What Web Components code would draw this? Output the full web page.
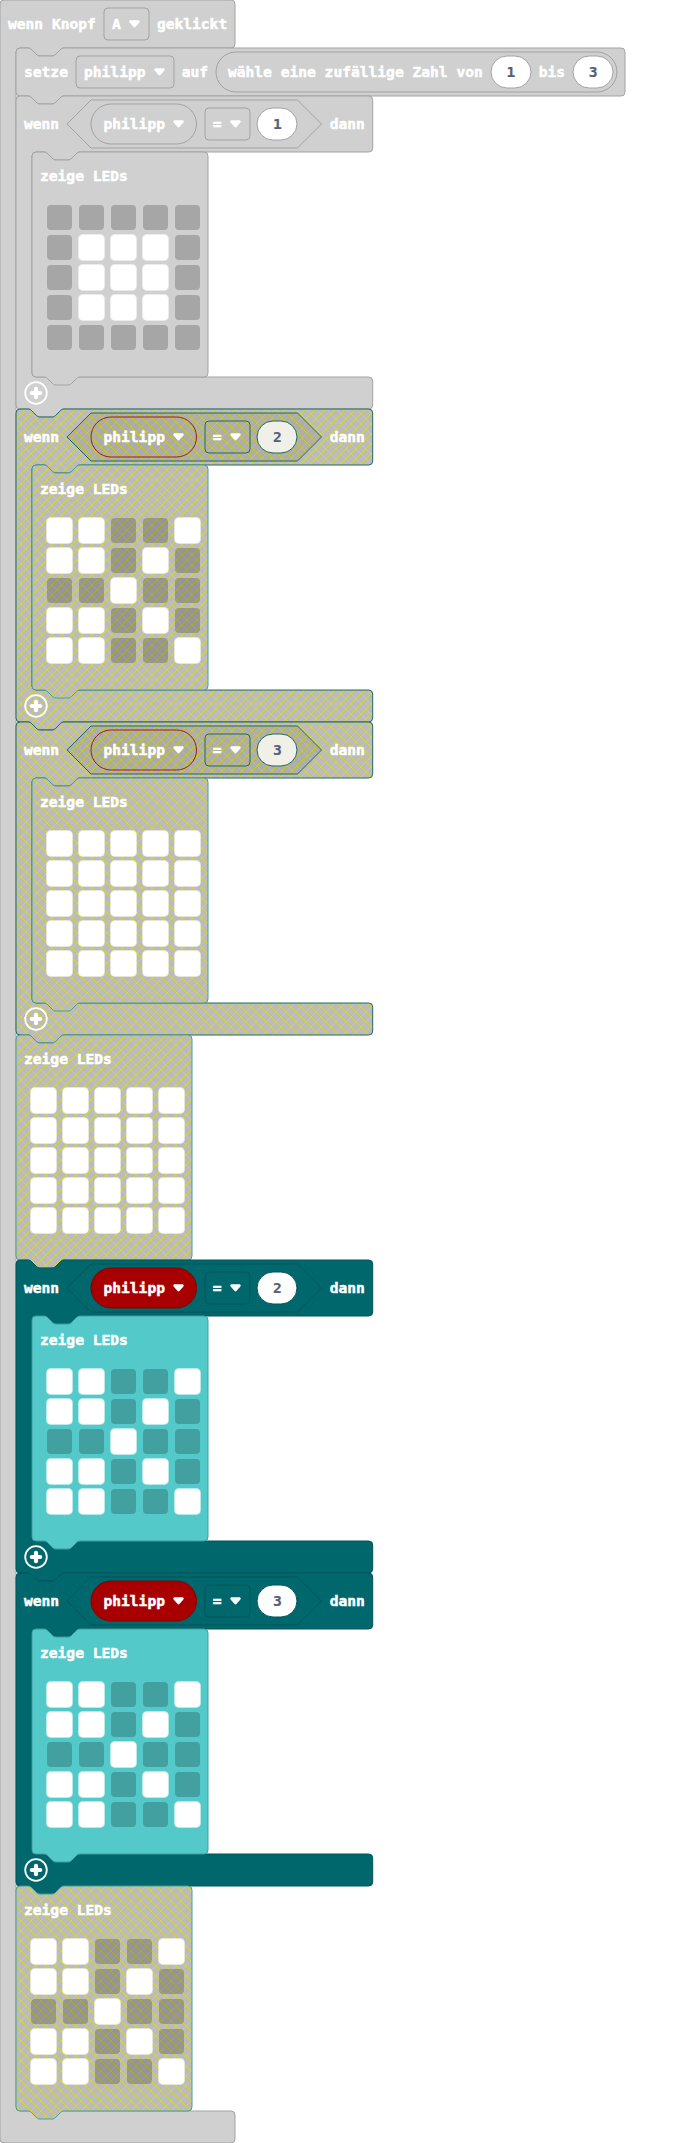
<!DOCTYPE html>
<html lang="de">
<head>
<meta charset="utf-8">
<title>Blöcke</title>
<style>
body { margin: 0; background: #fff; width: 677px; height: 2143px; overflow: hidden;
  font: bold 14.6px/20px "DejaVu Sans Mono", monospace; color: #fff; }
</style>
</head>
<body>
<event-block>
  <set-block></set-block>
  <if-block tone="grey" value="1" leds="..... .###. .###. .###. ....."></if-block>
  <if-block tone="hatch" value="2" leds="##..# ##.#. ..#.. ##.#. ##..#"></if-block>
  <if-block tone="hatch" value="3" leds="##### ##### ##### ##### #####"></if-block>
  <led-block tone="hatch" leds="##### ##### ##### ##### #####"></led-block>
  <if-block tone="teal" value="2" leds="##..# ##.#. ..#.. ##.#. ##..#"></if-block>
  <if-block tone="teal" value="3" leds="##..# ##.#. ..#.. ##.#. ##..#"></if-block>
  <led-block tone="hatch" leds="##..# ##.#. ..#.. ##.#. ##..#"></led-block>
</event-block>
<script>
const NOTCH = 'c2,0 3,1 4,2l4,4c1,1 2,2 4,2h12c2,0 3,-1 4,-2l4,-4c1,-1 2,-2 4,-2';
const TAB = 'c-2,0 -3,1 -4,2l-4,4c-1,1 -2,2 -4,2h-12c-2,0 -3,-1 -4,-2l-4,-4c-1,-1 -2,-2 -4,-2';
const TONES = {
  grey:  { logic: ['#d0d0d0', '#a3a3a3'], led: ['#d0d0d0', '#a3a3a3'], variable: ['#d0d0d0', '#a3a3a3'] },
  hatch: { logic: ['url(#hatch)', '#1f686c'], led: ['url(#hatch)', '#4a9c9e'], variable: ['url(#hatch)', '#a01c14'] },
  teal:  { logic: ['#00686d', '#00545a'], led: ['#54c9c9', '#419fa1'], variable: ['#a80000', '#860000'] }
};
const BASE = `:host{display:block;position:relative}
svg.shape{position:absolute;left:0;top:0;width:100%;height:100%;overflow:visible;pointer-events:none}
.row{position:relative;display:flex;align-items:center;box-sizing:border-box}`;

/* Outline drawn behind a block's content, with the hatch pattern of disabled blocks.
   Reporters are translucent, so they darken over the statement that holds them. */
function shape(d, [fill, stroke], reporter = false) {
  const hatched = fill.startsWith('url');
  const [ground, line] = reporter ? ['#aaa', '#cc0'] : ['#bbb', '#d6d633'];
  return `<svg class="shape">${hatched ? `<defs><pattern id="hatch" width="10" height="10" patternUnits="userSpaceOnUse">
<rect width="10" height="10" fill="${ground}"/><path d="M0 0L10 10M10 0L0 10" stroke="${line}"/></pattern></defs>` : ''}
<path d="${d}" fill="${fill}" fill-opacity="${hatched && reporter ? .8 : 1}" stroke="${stroke}"/></svg>`;
}
function roundRect(w, h, r) {
  return `M${r},0H${w - r}a${r},${r} 0 0 1 ${r},${r}V${h - r}a${r},${r} 0 0 1 ${-r},${r}H${r}a${r},${r} 0 0 1 ${-r},${-r}V${r}a${r},${r} 0 0 1 ${r},${-r}z`;
}
class Base extends HTMLElement {
  connectedCallback() {
    if (this.shadowRoot) return;
    this.tone = this.getAttribute('tone') || 'grey';
    this.attachShadow({ mode: 'open' }).innerHTML = `<style>${BASE}${this.css()}</style>${this.markup()}`;
  }
  css() { return ''; }
}

customElements.define('block-label', class extends Base {
  css() { return `:host{white-space:pre;flex:none;margin-top:-1px;-webkit-text-stroke:.5px currentColor}`; }
  markup() { return `<slot></slot>`; }
});

/* Dropdown: square field, or the round variable reporter with kind="variable". */
customElements.define('drop-field', class extends Base {
  css() {
    const v = this.getAttribute('kind') === 'variable', w = this.getAttribute('width');
    return `:host{width:${w}px;height:${v ? 40 : 32}px;flex:none}
.row{height:100%;justify-content:space-between;padding:0 ${v ? 12.5 : 8.5}px 0 ${v ? 12.3 : 8.2}px}
.caret{width:11px;height:8px;display:block;margin-top:-1px}`;
  }
  markup() {
    const v = this.getAttribute('kind') === 'variable', w = +this.getAttribute('width');
    const c = TONES[this.tone];
    return shape(roundRect(w, v ? 40 : 32, v ? 20 : 4), v ? c.variable : ['none', c.logic[1]], true) +
      `<div class="row"><block-label><slot></slot></block-label>
<svg class="caret" viewBox="0 0 11 8"><path d="M1.8.3H9.2C10.8.3 11.2 1.8 10.2 2.8L6.6 6.8Q5.5 8 4.4 6.8L.8 2.8C-.2 1.8.2.3 1.8.3Z" fill="#fff"/></svg></div>`;
  }
});

customElements.define('number-field', class extends Base {
  css() { return `:host{width:40px;height:32px;flex:none;color:#575e75}.row{height:100%;justify-content:center}block-label{-webkit-text-stroke-width:.2px}`; }
  markup() {
    const hatched = this.tone === 'hatch';
    return `<svg class="shape"><path d="${roundRect(40, 32, 16)}" fill="#fff" fill-opacity="${hatched ? .8 : 1}" stroke="${TONES[this.tone].logic[1]}"/></svg>
<div class="row"><block-label><slot></slot></block-label></div>`;
  }
});

customElements.define('compare-block', class extends Base {
  css() { return `:host{width:254.5px;height:48px;flex:none}.row{height:48px;padding-left:24px;gap:7.9px}`; }
  markup() {
    const t = this.tone;
    return shape('M24,0H230.5L254.5,24L230.5,48H24L0,24z', TONES[t].logic, true) +
      `<div class="row"><drop-field kind="variable" tone="${t}" width="105.5">philipp</drop-field>
<drop-field tone="${t}" width="45">=</drop-field>
<number-field tone="${t}"><slot></slot></number-field></div>`;
  }
});

customElements.define('led-block', class extends Base {
  css() {
    return `:host{width:176px;height:225px}
.row{height:50px;padding:0 0 2px 8px}
.grid{position:relative;display:grid;grid-template-columns:repeat(5,25px);grid-auto-rows:25px;gap:5px 7px;padding:3px 0 0 15px}
.grid i{border-radius:4px;background:rgba(0,0,0,.2)}
.grid i.on{background:#fff;box-shadow:0 0 0 1px rgba(255,255,255,.6)}`;
  }
  markup() {
    const cells = this.getAttribute('leds').replace(/ /g, '');
    return shape(`M0,4A4,4 0 0 1 4,0H12${NOTCH}H172a4,4 0 0 1 4,4V221a4,4 0 0 1 -4,4H48${TAB}H4a4,4 0 0 1 -4,-4z`, TONES[this.tone].led) +
      `<div class="row"><block-label>zeige LEDs</block-label></div>
<div class="grid">${[...cells].map(c => `<i${c === '#' ? ' class="on"' : ''}></i>`).join('')}</div>`;
  }
});

customElements.define('if-block', class extends Base {
  css() {
    return `:host{width:356.7px;height:313px}
.row{height:56px;padding-left:8px;gap:8px}
.body{margin-left:16px}
.foot{height:32px;padding-left:8px}
.foot svg{display:block;width:24px;height:24px;margin-top:-1px}`;
  }
  markup() {
    const t = this.tone;
    return shape(`M0,4A4,4 0 0 1 4,0H12${NOTCH}H352.7a4,4 0 0 1 4,4V52a4,4 0 0 1 -4,4H64${TAB}H20a4,4 0 0 0 -4,4V277a4,4 0 0 0 4,4H352.7a4,4 0 0 1 4,4V309a4,4 0 0 1 -4,4H48${TAB}H4a4,4 0 0 1 -4,-4z`, TONES[t].logic) +
      `<div class="row"><block-label>wenn</block-label><compare-block tone="${t}">${this.getAttribute('value')}</compare-block><block-label>dann</block-label></div>
<led-block class="body" tone="${t}" leds="${this.getAttribute('leds')}"></led-block>
<div class="row foot"><svg viewBox="0 0 24 24" fill="none" stroke="#fff"><circle cx="12" cy="12" r="10.8" stroke-width="1.8"/><path d="M12 7.8V16.2M7.8 12H16.2" stroke-width="4.2" stroke-linecap="round"/></svg></div>`;
  }
});

customElements.define('random-block', class extends Base {
  css() { return `:host{width:401px;height:40px;flex:none}.row{height:40px;padding-left:12px;gap:8px}`; }
  markup() {
    return shape(roundRect(401, 40, 20), TONES.grey.logic) +
      `<div class="row"><block-label>wähle eine zufällige Zahl von</block-label><number-field>1</number-field><block-label>bis</block-label><number-field>3</number-field></div>`;
  }
});

customElements.define('set-block', class extends Base {
  css() { return `:host{width:609px;height:48px}.row{height:48px;padding-left:8px;gap:7.9px}`; }
  markup() {
    return shape(`M0,4A4,4 0 0 1 4,0H12${NOTCH}H605a4,4 0 0 1 4,4V44a4,4 0 0 1 -4,4H48${TAB}H4a4,4 0 0 1 -4,-4z`, TONES.grey.logic) +
      `<div class="row"><block-label>setze</block-label><drop-field width="98">philipp</drop-field><block-label>auf</block-label><random-block></random-block></div>`;
  }
});

customElements.define('event-block', class extends Base {
  css() {
    return `:host{width:235px;height:2143px}
.row{height:48px;padding-left:8px;gap:8px}
.stack{position:relative;display:flex;flex-direction:column;align-items:flex-start;margin-left:16px}`;
  }
  markup() {
    return shape(`M0,4A4,4 0 0 1 4,0H231a4,4 0 0 1 4,4V44a4,4 0 0 1 -4,4H64${TAB}H20a4,4 0 0 0 -4,4V2107a4,4 0 0 0 4,4H231a4,4 0 0 1 4,4V2139a4,4 0 0 1 -4,4H4a4,4 0 0 1 -4,-4z`, TONES.grey.logic) +
      `<div class="row"><block-label>wenn Knopf</block-label><drop-field width="45">A</drop-field><block-label>geklickt</block-label></div>
<div class="stack"><slot></slot></div>`;
  }
});
</script>
</body>
</html>
